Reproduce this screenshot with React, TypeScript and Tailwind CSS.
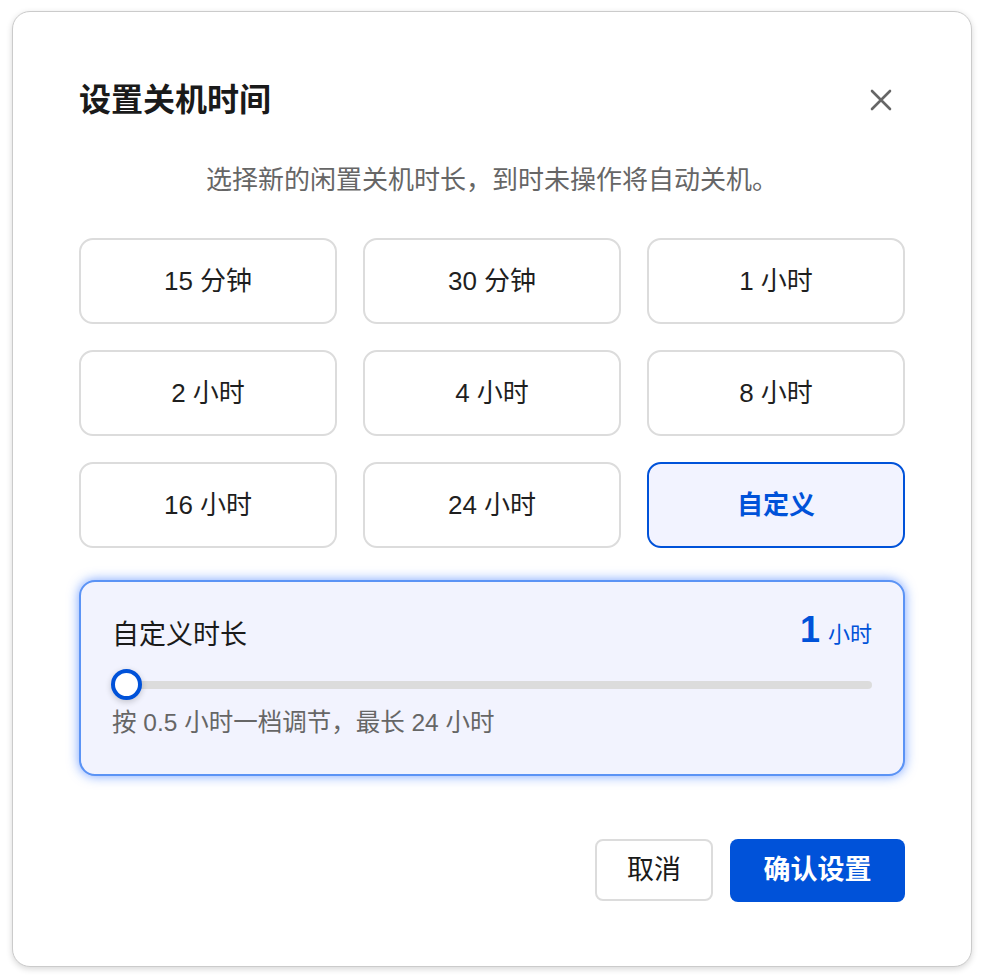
import { useState } from 'react'

const options = ['15 分钟', '30 分钟', '1 小时', '2 小时', '4 小时', '8 小时', '16 小时', '24 小时', '自定义']

const font = { fontFamily: '"Liberation Sans", "Noto Sans CJK SC", sans-serif' }

function CloseIcon() {
  return (
    <svg width="22" height="22" viewBox="0 0 22 22" fill="none">
      <path d="M2 2L20 20M20 2L2 20" stroke="#666666" strokeWidth="2.6" strokeLinecap="round" />
    </svg>
  )
}

export default function App() {
  const [selected, setSelected] = useState('自定义')

  return (
    <div className="min-h-screen bg-white pt-[11px] pl-[12px]" style={font}>
      <div className="w-[960px] h-[956px] bg-white rounded-[18px] border border-[#cbcbcb] shadow-[0_2px_6px_rgba(0,0,0,0.16)] px-[66px] pt-[68px]">
        {/* Header */}
        <div className="flex items-center justify-between">
          <h1 className="text-[32px] leading-[40px] font-bold text-[#1a1a1a]">设置关机时间</h1>
          <button className="w-[40px] h-[40px] flex items-center justify-center mr-[4px]">
            <CloseIcon />
          </button>
        </div>

        <p className="mt-[42px] text-center text-[26px] leading-[36px] text-[#666666]">
          选择新的闲置关机时长，到时未操作将自动关机。
        </p>

        {/* Options */}
        <div className="mt-[40px] grid grid-cols-3 gap-[26px]">
          {options.map((o) => {
            const active = o === selected
            return (
              <button
                key={o}
                onClick={() => setSelected(o)}
                className={
                  active
                    ? 'h-[86px] rounded-[14px] border-2 border-[#0052d9] bg-[#f2f3ff] text-[26px] font-bold text-[#0052d9]'
                    : 'h-[86px] rounded-[14px] border-2 border-[#dcdcdc] bg-white text-[26px] text-[#1f1f1f]'
                }
              >
                {o}
              </button>
            )
          })}
        </div>

        {/* Custom duration */}
        <div className="mt-[32px] rounded-[16px] border-2 border-[#5b93f5] bg-[#f2f3fe] shadow-[0_0_12px_rgba(30,100,255,0.6)] px-[31px] pt-[35px] pb-[35px]">
          <div className="flex items-end justify-between h-[36px]">
            <span className="text-[27px] leading-[36px] text-[#1a1a1a]">自定义时长</span>
            <span className="flex items-baseline gap-[8px] text-[#0052d9]">
              <span className="text-[36px] leading-[36px] font-bold">1</span>
              <span className="text-[22px] leading-[36px]">小时</span>
            </span>
          </div>
          <div className="relative mt-[16px] h-[32px]">
            <div className="absolute left-0 right-0 top-[12px] h-[8px] rounded-full bg-[#dcdcdc]" />
            <div className="absolute left-[-1px] top-0 w-[31px] h-[31px] rounded-full bg-white border-[4px] border-[#0052d9] shadow-[0_2px_6px_rgba(0,0,0,0.2)]" />
          </div>
          <p className="mt-[6px] text-[24.5px] leading-[32px] text-[#666666]">按 0.5 小时一档调节，最长 24 小时</p>
        </div>

        {/* Footer */}
        <div className="mt-[63px] flex justify-end gap-[17px]">
          <button className="w-[118px] h-[62px] rounded-[8px] border-2 border-[#dcdcdc] bg-white text-[27px] text-[#1a1a1a]">
            取消
          </button>
          <button className="w-[175px] h-[63px] rounded-[8px] bg-[#0052d9] text-[27px] font-bold text-white">
            确认设置
          </button>
        </div>
      </div>
    </div>
  )
}
